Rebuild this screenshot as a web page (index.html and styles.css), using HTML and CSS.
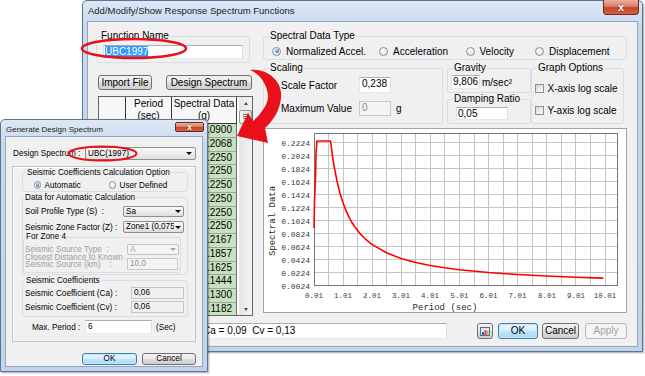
FILE: index.html
```html
<!DOCTYPE html>
<html>
<head>
    <title>Add/Modify/Show Response Spectrum Functions</title>
    <link rel="stylesheet" href="styles.css">
</head>
<body>
    <div class="window main-window">
        <div class="title-bar">
            <span class="title">Add/Modify/Show Response Spectrum Functions</span>
            <span class="close-btn">x</span>
        </div>
        <div class="client main-client">
            <div class="top-area">
                <div class="left-col">
                    <fieldset class="group fn-group">
                        <legend>Function Name</legend>
                        <div class="textbox fn-input"><span class="sel">UBC1997</span></div>
                    </fieldset>
                    <div class="btn-row">
                        <button class="btn import-btn">Import File</button>
                        <button class="btn design-btn">Design Spectrum</button>
                    </div>
                    <div class="grid">
                        <div class="cells">
                            <div class="gh"></div><div class="gh">Period<br>(sec)</div><div class="gh">Spectral Data<br>(g)</div>
                            <div class="rh"></div><div class="pc"></div><div class="vc">0.0900</div>
                            <div class="rh"></div><div class="pc"></div><div class="vc">0.2068</div>
                            <div class="rh"></div><div class="pc"></div><div class="vc">0.2250</div>
                            <div class="rh"></div><div class="pc"></div><div class="vc">0.2250</div>
                            <div class="rh"></div><div class="pc"></div><div class="vc">0.2250</div>
                            <div class="rh"></div><div class="pc"></div><div class="vc">0.2250</div>
                            <div class="rh"></div><div class="pc"></div><div class="vc">0.2250</div>
                            <div class="rh"></div><div class="pc"></div><div class="vc">0.2250</div>
                            <div class="rh"></div><div class="pc"></div><div class="vc">0.2167</div>
                            <div class="rh"></div><div class="pc"></div><div class="vc">0.1857</div>
                            <div class="rh"></div><div class="pc"></div><div class="vc">0.1625</div>
                            <div class="rh"></div><div class="pc"></div><div class="vc">0.1444</div>
                            <div class="rh"></div><div class="pc"></div><div class="vc">0.1300</div>
                            <div class="rh"></div><div class="pc"></div><div class="vc">0.1182</div>
                        </div>
                        <div class="vscroll">
                            <span class="sb-up"></span>
                            <span class="sb-thumb"><span class="grip"></span></span>
                            <span class="sb-track"></span>
                            <span class="sb-down"></span>
                        </div>
                    </div>
                </div>

                <div class="right-col">
                    <fieldset class="group type-group">
                        <legend>Spectral Data Type</legend>
                        <div class="type-row">
                            <label class="opt opt-1"><span class="radio on"></span>Normalized Accel.</label>
                            <label class="opt opt-2"><span class="radio"></span>Acceleration</label>
                            <label class="opt opt-3"><span class="radio"></span>Velocity</label>
                            <label class="opt"><span class="radio"></span>Displacement</label>
                        </div>
                    </fieldset>

                    <div class="option-row">
                        <fieldset class="group scaling-group">
                            <legend>Scaling</legend>
                            <div class="scale-row first">
                                <span class="radio"></span><span class="scale-label">Scale Factor</span>
                                <div class="textbox num-input">0,238</div>
                            </div>
                            <div class="scale-row second">
                                <span class="radio"></span><span class="scale-label">Maximum Value</span>
                                <div class="textbox num-input off">0</div><span class="unit">g</span>
                            </div>
                        </fieldset>
                        <div class="phys-col">
                            <fieldset class="group gravity-group">
                                <legend>Gravity</legend>
                                <div class="gravity-row"><div class="textbox grav-input">9,806</div><span>m/sec²</span></div>
                            </fieldset>
                            <fieldset class="group damping-group">
                                <legend>Damping Ratio</legend>
                                <div class="textbox damp-input">0,05</div>
                            </fieldset>
                        </div>
                        <fieldset class="group graph-group">
                            <legend>Graph Options</legend>
                            <label class="check-row first"><span class="check"></span>X-axis log scale</label>
                            <label class="check-row second"><span class="check"></span>Y-axis log scale</label>
                        </fieldset>
                    </div>

                    <div class="chart-panel">
                        <svg class="chart" width="364" height="185" viewBox="263 128 364 185">
                            <rect x="263.5" y="128.5" width="363" height="184" fill="#fff" stroke="#a3a3a3"/>
                            <path fill="none" stroke="#c4c4c4" d="M328.5 133V285M343.5 133V285M357.5 133V285M372.5 133V285M386.5 133V285M401.5 133V285M415.5 133V285M430.5 133V285M444.5 133V285M459.5 133V285M474.5 133V285M488.5 133V285M503.5 133V285M517.5 133V285M532.5 133V285M546.5 133V285M561.5 133V285M575.5 133V285M590.5 133V285M605.5 133V285M314 142.5H618M314 155.5H618M314 168.5H618M314 181.5H618M314 194.5H618M314 207.5H618M314 220.5H618M314 233.5H618M314 246.5H618M314 259.5H618M314 272.5H618"/>
                            <rect x="314.5" y="133.5" width="303" height="152" fill="none" stroke="#777"/>
                            <g class="y-labels" text-anchor="end">
                                <text x="310" y="145.5">0.2224</text>
                                <text x="310" y="158.5">0.2024</text>
                                <text x="310" y="171.5">0.1824</text>
                                <text x="310" y="184.5">0.1624</text>
                                <text x="310" y="197.5">0.1424</text>
                                <text x="310" y="210.5">0.1224</text>
                                <text x="310" y="223.5">0.1024</text>
                                <text x="310" y="236.5">0.0824</text>
                                <text x="310" y="249.5">0.0624</text>
                                <text x="310" y="262.5">0.0424</text>
                                <text x="310" y="275.5">0.0224</text>
                                <text x="310" y="288.5">0.0024</text>
                            </g>
                            <g class="x-labels" text-anchor="middle">
                                <text x="314" y="298">0.01</text>
                                <text x="343" y="298">1.01</text>
                                <text x="372" y="298">2.01</text>
                                <text x="401" y="298">3.01</text>
                                <text x="430" y="298">4.01</text>
                                <text x="459.5" y="298">5.01</text>
                                <text x="488.5" y="298">6.01</text>
                                <text x="517.5" y="298">7.01</text>
                                <text x="547" y="298">8.01</text>
                                <text x="576" y="298">9.01</text>
                                <text x="605" y="298">10.01</text>
                            </g>
                            <text class="axis-title" transform="translate(274.5 221) rotate(-90)" text-anchor="middle">Spectral Data</text>
                            <text class="axis-title" x="445" y="309.5" text-anchor="middle">Period (sec)</text>
                            <polyline fill="none" stroke="#f00" stroke-width="1.6" stroke-linejoin="round" points="314,228 314.5,200 315.5,178 316,153 317,141 330.5,141 331.2,146 332.6,156.9 334.1,166.1 337,181.2 339.9,192.9 342.8,202.3 345.7,209.9 348.6,216.3 351.5,221.7 354.4,226.3 360.3,233.9 366.1,239.7 371.9,244.4 386.5,252.8 401,258.5 415.6,262.5 430.1,265.5 444.7,267.8 459.2,269.7 488.3,272.5 517.4,274.5 546.5,276 575.6,277.2 603.3,278.1"/>
                        </svg>
                    </div>
                </div>
            </div>

            <div class="bottom-row">
                <div class="textbox info-box">Ca = 0,09&nbsp; Cv = 0,13</div>
                <button class="btn icon-btn">
                    <svg width="10" height="9" viewBox="0 0 10 9">
                        <rect x="0.5" y="0.5" width="9" height="8" fill="#dbe7f6" stroke="#4d6f9f"/>
                        <rect x="2" y="5" width="2" height="3" fill="#3a5fa8"/>
                        <rect x="4.5" y="3" width="2" height="5" fill="#e0492a"/>
                        <rect x="7" y="4" width="1.5" height="4" fill="#e8b020"/>
                    </svg>
                </button>
                <button class="btn ok-btn main-ok">OK</button>
                <button class="btn cancel-btn">Cancel</button>
                <button class="btn apply-btn" disabled>Apply</button>
            </div>
        </div>
    </div>

    <div class="window dialog">
        <div class="title-bar dlg-title-bar">
            <span class="title dlg-title">Generate Design Spectrum</span>
            <span class="close-btn dlg-close">x</span>
        </div>
        <div class="client dlg-client">
            <div class="spectrum-row">
                <span class="dlg-label">Design Spectrum :</span>
                <div class="combo spectrum-combo"><span class="combo-text">UBC(1997)</span><span class="arrow"></span></div>
            </div>
            <div class="dlg-frame">
                <fieldset class="group sm-group calc-group">
                    <legend>Seismic Coefficients Calculation Option</legend>
                    <div class="calc-row">
                        <label class="sm-opt auto-opt"><span class="radio sm on"></span>Automatic</label>
                        <label class="sm-opt"><span class="radio sm"></span>User Defined</label>
                    </div>
                </fieldset>
                <fieldset class="group sm-group data-group">
                    <legend>Data for Automatic Calculation</legend>
                    <div class="field-row soil-row">
                        <span class="field-label">Soil Profile Type (S)&nbsp; :</span>
                        <div class="combo small-combo"><span class="combo-text">Sa</span><span class="arrow"></span></div>
                    </div>
                    <div class="field-row zone-row">
                        <span class="field-label">Seismic Zone Factor (Z) :</span>
                        <div class="combo small-combo"><span class="combo-text">Zone1 (0,075</span><span class="arrow"></span></div>
                    </div>
                    <fieldset class="group sm-group zone4-group">
                        <legend>For Zone 4</legend>
                        <div class="field-row source-row off">
                            <span class="zone-label">Seismic Source Type&nbsp; :</span>
                            <div class="combo zone-combo off"><span class="combo-text">A</span><span class="arrow"></span></div>
                        </div>
                        <div class="field-row dist-row off">
                            <span class="zone-label dist-label">Closest Distance to Known<br>Seismic Source (km)&nbsp;&nbsp;&nbsp; :</span>
                            <div class="textbox dist-input off">10,0</div>
                        </div>
                    </fieldset>
                </fieldset>
                <fieldset class="group sm-group coef-group">
                    <legend>Seismic Coefficients</legend>
                    <div class="field-row coef-row first">
                        <span class="coef-label">Seismic Coefficient (Ca) :</span>
                        <div class="textbox coef-field">0,06</div>
                    </div>
                    <div class="field-row coef-row second">
                        <span class="coef-label">Seismic Coefficient (Cv) :</span>
                        <div class="textbox coef-field">0,06</div>
                    </div>
                </fieldset>
                <div class="period-row">
                    <span class="period-label">Max. Period :</span>
                    <div class="textbox period-input">6</div>
                    <span class="period-unit">(Sec)</span>
                </div>
            </div>
            <div class="dlg-buttons">
                <button class="btn ok-btn dlg-ok">OK</button>
                <button class="btn dlg-cancel">Cancel</button>
            </div>
        </div>
    </div>

    <svg class="annot" width="645" height="376" viewBox="0 0 645 376">
        <ellipse cx="134" cy="48.5" rx="52" ry="9.5" fill="none" stroke="#e8101a" stroke-width="2.5"/>
        <ellipse cx="102.5" cy="153.5" rx="34" ry="7" fill="none" stroke="#e8101a" stroke-width="2"/>
        <path fill="#e8101a" d="M250 70 C266 68 283 80 281 98 C280 110 273 121 265 128 L268 143 L237 136 L248 113 L253 121 C262 113 268 104 268 96 C267 84 260 74 250 70 Z"/>
    </svg>
</body>
</html>
```

FILE: styles.css
```css
* {
    box-sizing: border-box;
}
body {
    margin: 0;
    width: 645px;
    height: 376px;
    overflow: hidden;
    position: relative;
    background: #fff;
    font-family: "Liberation Sans", Arial, sans-serif;
    font-size: 10px;
    color: #000;
}

/* windows */
.window {
    position: absolute;
    display: flex;
    flex-direction: column;
    border: 1px solid #5d7492;
    border-radius: 5px 5px 0 0;
    background: linear-gradient(#dde8f5, #c8d9ed 24px, #c2d4ea);
    box-shadow: 1px 1px 2px rgba(0, 0, 0, 0.35);
}
.main-window {
    left: 82px;
    top: 0;
    width: 561px;
    height: 352px;
    padding: 0 5px 5px;
}
.title-bar {
    display: flex;
    height: 21px;
    flex: none;
}
.title {
    padding-top: 4px;
    line-height: 12px;
    font-size: 9.5px;
    color: #1b1b1b;
}
.close-btn {
    margin: -1px -2px 0 auto;
    width: 36px;
    height: 15px;
    display: flex;
    align-items: center;
    justify-content: center;
    border: 1px solid #6e2a1d;
    border-top: none;
    border-radius: 0 0 4px 4px;
    background: linear-gradient(#eab0a2, #d98066 45%, #c4452b 55%, #d4623f);
    color: #fff;
    font-size: 11px;
    font-weight: bold;
    line-height: 11px;
    text-shadow: 0 0 2px #5b1b10;
}
.client {
    flex: 1;
    background: #f0f0f0;
    box-shadow: 0 0 0 1px #92a6c0;
}
.main-client {
    padding: 8px 10px 0 8px;
}
.top-area {
    display: flex;
    height: 283px;
}
.left-col {
    width: 157px;
    flex: none;
}
.right-col {
    width: 364px;
    margin-left: 10px;
    flex: none;
}

/* common controls */
fieldset.group {
    margin: 0;
    padding: 0;
    min-width: 0;
    border: 1px solid #d5dfe5;
    border-radius: 3px;
}
.group legend {
    padding: 0 1px;
    margin-left: 5px;
    line-height: 12px;
}
.textbox {
    background: #fff;
    border: 1px solid #abadb3;
    border-color: #abadb3 #dbdfe6 #e3e9ef #e2e3ea;
    padding: 0 2px;
    line-height: 12px;
    white-space: nowrap;
    overflow: hidden;
}
.textbox.off {
    background: #f4f4f4;
    border-color: #c9c9c9;
    color: #8d8d8d;
}
.btn {
    height: 15px;
    padding: 0;
    font-family: inherit;
    font-size: 10px;
    line-height: 13px;
    color: #000;
    border: 1px solid #707070;
    border-radius: 3px;
    background: linear-gradient(#f2f2f2, #ebebeb 45%, #dddddd 50%, #cfcfcf);
}
.ok-btn {
    border-color: #3c7fb1;
    background: linear-gradient(#eaf6fd, #d9f0fc 45%, #bee6fd 50%, #a7d9f5);
    box-shadow: inset 0 0 0 1px #c6e8fa;
}
.btn:disabled {
    color: #a3a3a3;
    border-color: #b5b9bc;
    background: #f4f4f4;
}
.radio {
    position: relative;
    flex: none;
    width: 9px;
    height: 9px;
    border: 1px solid #8e8f8f;
    border-radius: 50%;
    background: radial-gradient(circle at 40% 35%, #fff, #d9d9d9);
}
.radio.on::after {
    content: "";
    position: absolute;
    left: 1.5px;
    top: 1.5px;
    width: 4px;
    height: 4px;
    border-radius: 50%;
    background: radial-gradient(circle at 35% 35%, #9ccdf6, #1c5fa8);
}
.check {
    flex: none;
    width: 9px;
    height: 9px;
    border: 1px solid #8e8f8f;
    background: linear-gradient(135deg, #d6d6d6, #fbfbfb);
}

/* left column */
.fn-group {
    margin-left: 3px;
    width: 154px;
    height: 33px;
}
.fn-group legend {
    margin-left: 3px;
}
.fn-input {
    width: 140px;
    height: 14px;
    margin: 3px 0 0 6px;
    padding: 0 1px;
}
.fn-input .sel {
    background: #3399ff;
    color: #fff;
}
.btn-row {
    display: flex;
    gap: 14px;
    margin: 12px 0 0 2px;
}
.import-btn {
    width: 54px;
}
.design-btn {
    width: 86px;
}
.grid {
    display: flex;
    width: 155px;
    height: 220px;
    margin: 6px 0 0 2px;
    border: 1px solid #646464;
    background: #fff;
    overflow: hidden;
}
.cells {
    display: grid;
    grid-template-columns: 27px 46px 65px;
    grid-template-rows: 27px;
    grid-auto-rows: 13.77px;
    align-content: start;
    width: 138px;
    flex: none;
}
.cells > div {
    border-right: 1px solid #a2a2a2;
    border-bottom: 1px solid #a2a2a2;
    line-height: 12.77px;
}
.cells > .gh {
    background: #f7f7f7;
    border-color: #3a3a3a;
    text-align: center;
    padding-top: 1px;
    line-height: 12px;
}
.rh {
    background: #f4f4f4;
}
.vc {
    background: #c6e2c1;
    text-align: right;
    padding-right: 4px;
}
.cells > .vc {
    border-right-color: #6a6a6a;
}
.vscroll {
    display: flex;
    flex-direction: column;
    width: 13px;
    margin-left: 2px;
    background: linear-gradient(to right, #e4e4e4, #f3f3f3);
}
.sb-up, .sb-down {
    height: 12px;
    display: flex;
    align-items: center;
    justify-content: center;
}
.sb-up::before {
    content: "";
    border-left: 2.5px solid transparent;
    border-right: 2.5px solid transparent;
    border-bottom: 3px solid #4a4a4a;
}
.sb-down::before {
    content: "";
    border-left: 2.5px solid transparent;
    border-right: 2.5px solid transparent;
    border-top: 3px solid #4a4a4a;
}
.sb-thumb {
    height: 14px;
    margin-top: 1px;
    border: 1px solid #979797;
    border-radius: 2px;
    background: linear-gradient(to right, #f4f4f4, #dadada);
    padding-top: 3px;
}
.grip {
    display: block;
    width: 5px;
    height: 1px;
    margin: 0 auto;
    background: #6f6f6f;
    box-shadow: 0 2px #6f6f6f, 0 4px #6f6f6f;
}
.sb-track {
    flex: 1;
}

/* right column */
.type-group {
    width: 364px;
    height: 30px;
}
.type-row {
    display: flex;
    align-items: center;
    height: 12px;
    margin-top: 3px;
    padding-left: 8px;
}
.opt {
    display: flex;
    align-items: center;
    gap: 5px;
    flex: none;
}
.opt-1 {
    width: 107px;
}
.opt-2 {
    width: 86.5px;
}
.opt-3 {
    width: 69.5px;
}
.option-row {
    display: flex;
    height: 62px;
    margin-top: 2px;
}
.scaling-group {
    width: 180px;
    height: 62px;
    flex: none;
}
.scale-row {
    display: flex;
    align-items: center;
    padding-left: 3px;
}
.scale-row.first {
    margin-top: 3px;
    height: 16px;
}
.scale-row.second {
    margin-top: 8px;
    height: 15px;
}
.scale-label {
    width: 78px;
    margin-left: 5px;
    flex: none;
}
.num-input {
    width: 32px;
    height: 100%;
    line-height: 12px;
}
.unit {
    margin-left: 5px;
}
.phys-col {
    width: 84px;
    margin-left: 4px;
    flex: none;
}
.gravity-group, .damping-group {
    height: 31px;
}
.gravity-row {
    display: flex;
    align-items: center;
    margin-top: 1px;
    padding-left: 3px;
}
.grav-input {
    width: 29px;
    height: 14px;
    margin-right: 2px;
    padding: 0 1px;
}
.damp-input {
    width: 52px;
    height: 13px;
    margin: 2px 0 0 8px;
    line-height: 11px;
    padding: 0 1px;
}
.graph-group {
    width: 93px;
    height: 62px;
    margin-left: 3px;
    flex: none;
}
.check-row {
    display: flex;
    align-items: center;
    gap: 3.5px;
    height: 12px;
    padding-left: 3px;
}
.check-row.first {
    margin-top: 8px;
}
.check-row.second {
    margin-top: 10px;
}
.chart-panel {
    margin-top: 4px;
    height: 185px;
}
.chart {
    display: block;
}
.chart text {
    font-family: "Liberation Mono", monospace;
    fill: #3a3a3a;
}
.y-labels text {
    font-size: 8px;
}
.x-labels text {
    font-size: 7.5px;
}
.chart .axis-title {
    font-size: 9px;
    fill: #2a2a2a;
}

/* bottom row */
.bottom-row {
    display: flex;
    height: 16px;
    margin-top: 10px;
}
.info-box {
    width: 349px;
    margin-left: 2px;
    padding-left: 104px;
    line-height: 14px;
}
.bottom-row .btn {
    height: 16px;
    line-height: 14px;
}
.bottom-row .icon-btn {
    width: 16px;
    margin-left: 30px;
    display: flex;
    align-items: center;
    justify-content: center;
}
.main-ok {
    width: 40px;
    margin-left: 5px;
}
.cancel-btn {
    width: 37px;
    margin-left: 4px;
}
.apply-btn {
    width: 42px;
    margin-left: 6px;
}

/* design spectrum dialog */
.dialog {
    left: 0;
    top: 119px;
    width: 208px;
    height: 253px;
    padding: 0 5px 5px;
    font-size: 8.2px;
}
.dlg-title-bar {
    height: 17px;
}
.dlg-title {
    padding-top: 5px;
    line-height: 10px;
    font-size: 8px;
}
.dlg-close {
    width: 29px;
    height: 10px;
    margin: 2px -2px 0 auto;
    border-top: 1px solid #6e2a1d;
    border-radius: 2px;
    font-size: 9px;
    line-height: 9px;
}
.dlg-client {
    padding-top: 10px;
}
.spectrum-row {
    display: flex;
    align-items: center;
    height: 13px;
    padding-left: 7px;
}
.dlg-label {
    width: 72px;
    flex: none;
}
.combo {
    display: flex;
    align-items: center;
    flex: none;
    border: 1px solid #8e8f8f;
    border-radius: 2px;
    background: linear-gradient(#f8f8f8, #ececec 50%, #dedede);
    padding: 0 2px 0 2px;
    line-height: 10px;
}
.combo-text {
    flex: 1;
    overflow: hidden;
    white-space: nowrap;
}
.arrow {
    flex: none;
    margin-left: 1px;
    border-left: 3px solid transparent;
    border-right: 3px solid transparent;
    border-top: 3px solid #111;
}
.combo.off {
    border-color: #c3c3c3;
    background: #f4f4f4;
}
.combo.off .arrow {
    border-top-color: #a5a5a5;
}
.spectrum-combo {
    width: 111px;
    height: 13px;
    padding-right: 3px;
}
.dlg-frame {
    width: 184px;
    height: 176px;
    margin: 6px 0 0 6px;
    padding-left: 9px;
    border: 1px solid #c4c4c4;
    box-shadow: inset 1px 1px 0 #fff;
}
.sm-group {
    width: 166px;
}
.sm-group legend {
    line-height: 11px;
}
.calc-group {
    height: 25px;
}
.calc-group legend {
    margin-left: 3px;
}
.calc-row {
    display: flex;
    align-items: center;
    height: 10px;
    margin-top: 2px;
    padding-left: 10.5px;
}
.sm-opt {
    display: flex;
    align-items: center;
    gap: 3.5px;
}
.auto-opt {
    width: 75px;
}
.radio.sm {
    width: 7.5px;
    height: 7.5px;
}
.radio.sm.on::after {
    left: 1.2px;
    top: 1.2px;
    width: 3.2px;
    height: 3.2px;
}
.data-group {
    height: 83px;
}
.data-group > legend {
    margin-left: 1px;
}
.field-row {
    display: flex;
    align-items: center;
    padding-left: 2px;
}
.field-label {
    width: 98px;
    flex: none;
}
.small-combo {
    width: 61px;
    height: 100%;
}
.soil-row {
    margin-top: 3px;
    height: 11px;
}
.zone-row {
    margin-top: 4px;
    height: 12px;
}
.zone4-group {
    width: 158px;
    height: 40px;
    margin-left: 4px;
}
.zone4-group legend {
    line-height: 8px;
    margin-left: 1px;
}
.off {
    color: #9d9d9d;
}
.zone-label {
    width: 102px;
    flex: none;
}
.source-row {
    margin-top: 3px;
    height: 11px;
    padding-left: 1px;
}
.zone-combo {
    width: 52px;
    height: 11px;
}
.dist-row {
    height: 16px;
    padding-left: 1px;
    align-items: flex-start;
}
.dist-label {
    margin-top: -1.5px;
    line-height: 7.5px;
}
.dist-input {
    align-self: flex-end;
    width: 51px;
    height: 12px;
    margin-bottom: 1px;
    line-height: 10px;
}
.coef-group {
    height: 42px;
    margin-top: 1px;
}
.coef-group legend {
    margin-left: 2px;
}
.coef-row {
    height: 12px;
}
.coef-row.first {
    margin-top: 1px;
}
.coef-row.second {
    margin-top: 2px;
}
.coef-label {
    width: 106px;
    flex: none;
}
.coef-field {
    width: 53px;
    height: 12px;
    line-height: 10px;
    background: #f0f0f0;
    border-color: #c6c6c6;
}
.period-row {
    display: flex;
    align-items: center;
    height: 14px;
    margin-top: 3px;
    padding-left: 10px;
}
.period-label {
    width: 53px;
    flex: none;
}
.period-input {
    width: 67px;
    height: 14px;
    line-height: 12px;
}
.period-unit {
    margin-left: 4px;
}
.dlg-buttons {
    display: flex;
    justify-content: flex-end;
    gap: 5px;
    margin-top: 11px;
    padding-right: 6px;
}
.dlg-buttons .btn {
    height: 12px;
    font-size: 8.2px;
    line-height: 10px;
}
.dlg-ok {
    width: 55px;
}
.dlg-cancel {
    width: 54px;
}

/* annotations drawn over the screenshot */
.annot {
    position: absolute;
    left: 0;
    top: 0;
    pointer-events: none;
}
```
